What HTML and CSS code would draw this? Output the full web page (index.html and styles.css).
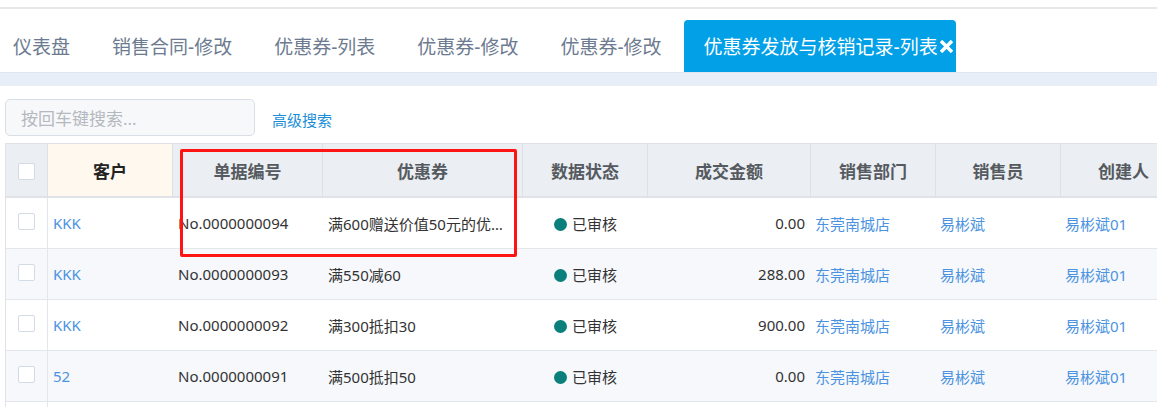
FILE: index.html
```html
<!DOCTYPE html>
<html lang="zh-CN">
<head>
<meta charset="utf-8">
<title>优惠券发放与核销记录-列表</title>
<link rel="stylesheet" href="styles.css">
</head>
<body>
<div class="topline"></div>
<nav class="tabs">
  <div class="tab first">仪表盘</div>
  <div class="tab">销售合同-修改</div>
  <div class="tab">优惠券-列表</div>
  <div class="tab">优惠券-修改</div>
  <div class="tab">优惠券-修改</div>
  <div class="tab active">优惠券发放与核销记录-列表<svg class="close" width="13" height="13" viewBox="0 0 13 13"><path d="M2.2 2.2 L10.8 10.8 M10.8 2.2 L2.2 10.8" stroke="#ffffff" stroke-width="3.4" stroke-linecap="square"/></svg></div>
</nav>
<div class="band"></div>
<main class="content">
  <div class="toolbar">
    <div class="search">按回车键搜索...</div>
    <a class="adv">高级搜索</a>
  </div>
  <div class="table-wrap">
    <table class="grid">
      <colgroup>
        <col class="c-chk"><col class="c-cust"><col class="c-no"><col class="c-coupon"><col class="c-status"><col class="c-amt"><col class="c-dept"><col class="c-sales"><col class="c-creator">
      </colgroup>
      <thead>
        <tr>
          <th class="chk"><span class="box"></span></th>
          <th class="sorted">客户</th>
          <th>单据编号</th>
          <th>优惠券</th>
          <th>数据状态</th>
          <th>成交金额</th>
          <th>销售部门</th>
          <th>销售员</th>
          <th>创建人</th>
        </tr>
      </thead>
      <tbody>
        <tr>
          <td class="chk"><span class="box"></span></td>
          <td class="link">KKK</td>
          <td>No.0000000094</td>
          <td class="ellip">满600赠送价值50元的优惠券</td>
          <td class="status"><span class="dot"></span>已审核</td>
          <td class="num">0.00</td>
          <td class="link">东莞南城店</td>
          <td class="link">易彬斌</td>
          <td class="link">易彬斌01</td>
        </tr>
        <tr class="alt">
          <td class="chk"><span class="box"></span></td>
          <td class="link">KKK</td>
          <td>No.0000000093</td>
          <td class="ellip">满550减60</td>
          <td class="status"><span class="dot"></span>已审核</td>
          <td class="num">288.00</td>
          <td class="link">东莞南城店</td>
          <td class="link">易彬斌</td>
          <td class="link">易彬斌01</td>
        </tr>
        <tr>
          <td class="chk"><span class="box"></span></td>
          <td class="link">KKK</td>
          <td>No.0000000092</td>
          <td class="ellip">满300抵扣30</td>
          <td class="status"><span class="dot"></span>已审核</td>
          <td class="num">900.00</td>
          <td class="link">东莞南城店</td>
          <td class="link">易彬斌</td>
          <td class="link">易彬斌01</td>
        </tr>
        <tr class="alt">
          <td class="chk"><span class="box"></span></td>
          <td class="link">52</td>
          <td>No.0000000091</td>
          <td class="ellip">满500抵扣50</td>
          <td class="status"><span class="dot"></span>已审核</td>
          <td class="num">0.00</td>
          <td class="link">东莞南城店</td>
          <td class="link">易彬斌</td>
          <td class="link">易彬斌01</td>
        </tr>
        <tr>
          <td class="chk"><span class="box"></span></td>
          <td class="link"></td>
          <td></td>
          <td></td>
          <td></td>
          <td></td>
          <td></td>
          <td></td>
          <td></td>
        </tr>
      </tbody>
    </table>
    <div class="highlight"></div>
  </div>
</main>
</body>
</html>
```

FILE: styles.css
```css
* { box-sizing: border-box; }

html, body {
  margin: 0;
  padding: 0;
  background: #ffffff;
  overflow: hidden;
  font-family: "Noto Sans", "Noto Sans CJK SC", sans-serif;
  color: #333333;
}

.topline {
  height: 9px;
  border-bottom: 2px solid #e6e7e9;
}

.tabs {
  display: flex;
  align-items: flex-end;
  height: 64px;
  border-bottom: 1px solid #dfe5ee;
}

.tab {
  height: 52px;
  display: flex;
  align-items: center;
  padding: 0 21px;
  font-size: 19px;
  color: #6d7b90;
  white-space: nowrap;
}

.tab.first { padding-left: 13px; }

.tab.active {
  margin-left: 1px;
  background: #02a0e6;
  color: #ffffff;
  border-radius: 4px 4px 0 0;
  padding: 0 3px 0 20px;
}

.tab .close {
  margin-left: 2px;
  position: relative;
  top: 0;
  flex: none;
}

.band {
  height: 13px;
  background: #e8eef7;
}

.content {
  padding: 13px 0 0 5px;
}

.toolbar {
  display: flex;
  align-items: center;
  gap: 17px;
}

.search {
  width: 250px;
  height: 37px;
  border: 1px solid #d9dfe7;
  border-radius: 5px;
  background: #f7f8fa;
  color: #b4b9c0;
  font-size: 17px;
  display: flex;
  align-items: center;
  padding-left: 15px;
}

.adv {
  color: #1a8fd8;
  font-size: 15px;
  margin-top: 4px;
}

.table-wrap {
  position: relative;
  margin-top: 7px;
  width: 1300px;
}

.grid {
  border-collapse: separate;
  border-spacing: 0;
  table-layout: fixed;
  width: 1305px;
  border-top: 1px solid #dfe3e8;
  border-left: 1px solid #dfe3e8;
}

.c-chk { width: 42px; }
.c-cust { width: 125px; }
.c-no { width: 150px; }
.c-coupon { width: 200px; }
.c-status { width: 125px; }
.c-amt { width: 163px; }
.c-dept { width: 125px; }
.c-sales { width: 125px; }
.c-creator { width: 250px; }

.grid th {
  height: 54px;
  background: #ebeef2;
  font-size: 17px;
  font-weight: bold;
  color: #555a60;
  text-align: center;
  border-right: 1px solid #dde1e6;
  border-bottom: 2px solid #dfe3e8;
  padding: 0;
}

.grid th:last-child { text-align: left; padding-left: 37px; }

.grid th.sorted {
  background: #fef8ef;
  color: #222222;
}

.grid td {
  height: 51px;
  font-size: 15px;
  padding: 0 6px;
  border-bottom: 1px solid #e3e6ea;
  white-space: nowrap;
  overflow: hidden;
}

.grid tr.alt td { background: #f6f8fb; }

.grid td.chk,
.grid th.chk {
  border-right: 1px solid #e3e6ea;
  text-align: center;
  padding: 0;
}

.grid th.chk { border-right-color: #dde1e6; }

.box {
  display: inline-block;
  width: 17px;
  height: 17px;
  border: 1px solid #d3dbe6;
  border-radius: 2px;
  background: #ffffff;
  vertical-align: middle;
}

.grid td.chk .box { position: relative; top: -3px; }

.grid td.link { color: #4b93e0; padding-left: 5px; }
.grid td:nth-child(2) { padding-left: 5px; }
.grid td:nth-child(3) { padding-left: 5px; }

.grid td.ellip { text-overflow: ellipsis; padding-left: 5px; }

.grid td.status { text-align: center; }

.dot {
  display: inline-block;
  width: 13px;
  height: 13px;
  border-radius: 50%;
  background: #0a7f7b;
  margin-right: 5px;
  vertical-align: -1px;
}

.grid td.num { text-align: right; }

.grid td:nth-child(7),
.grid td:nth-child(8),
.grid td:nth-child(9) { padding-left: 4px; }

.highlight {
  position: absolute;
  left: 175px;
  top: 6px;
  width: 337px;
  height: 108px;
  border: 3px solid #ff1414;
  border-radius: 2px;
  pointer-events: none;
}
```
